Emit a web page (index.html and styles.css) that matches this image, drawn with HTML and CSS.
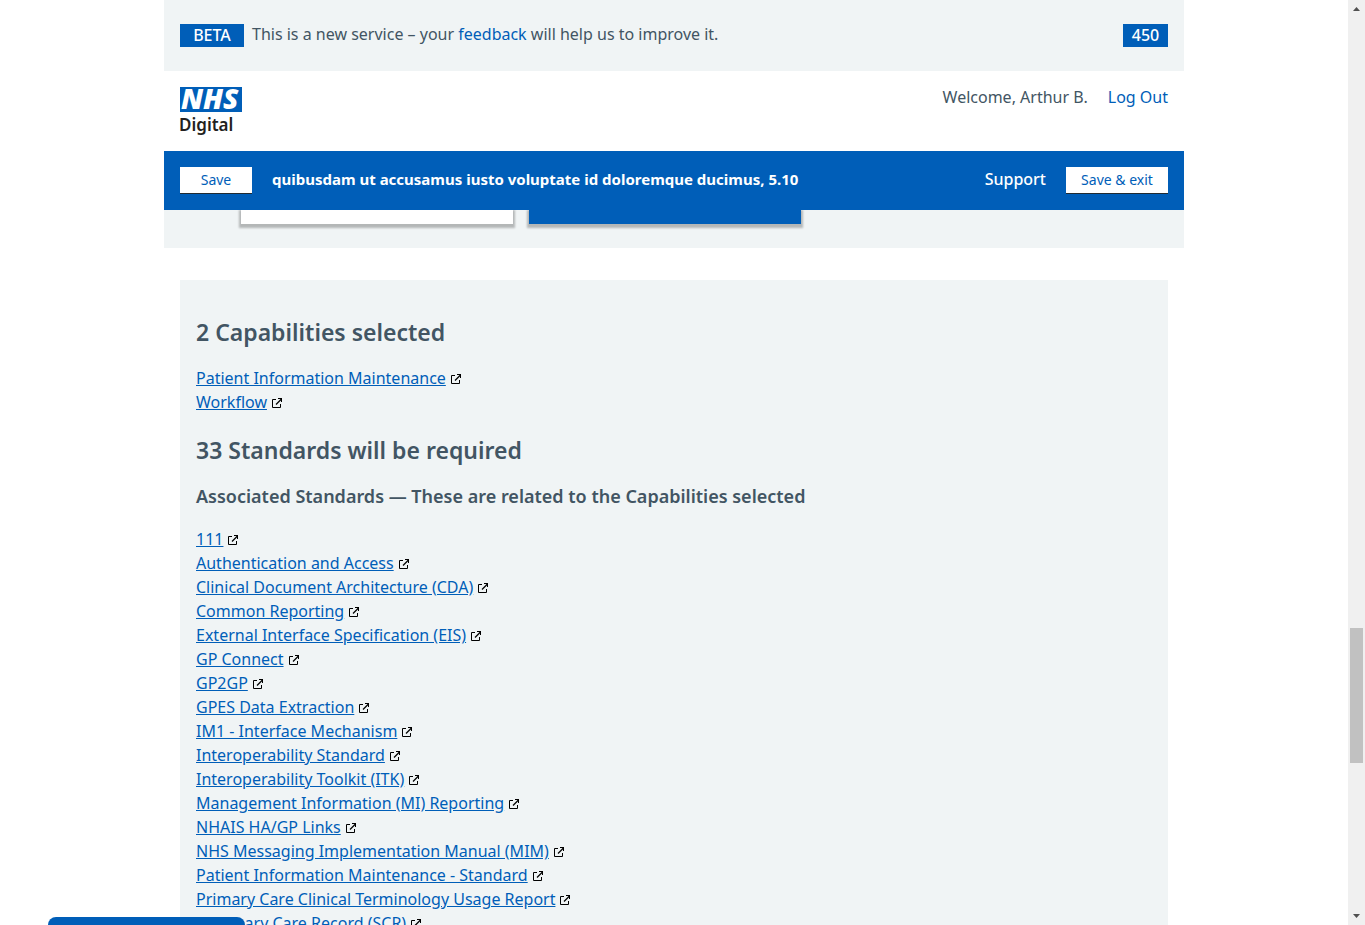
FILE: index.html
```
<!DOCTYPE html>
<html lang="en">
<head>
<meta charset="utf-8">
<title>NHS Digital - Capabilities and Standards</title>
<link rel="stylesheet" href="styles.css">
</head>
<body>
<svg class="sprite" aria-hidden="true">
  <symbol id="ext" viewBox="0 0 12 12">
    <path d="M5 2.500H1.500v8h8V7" fill="none" stroke="#000"/>
    <path d="M5 7.500L10 2.500" fill="none" stroke="#000" stroke-width="1.300"/>
    <path d="M7 1.500h3.500V5" fill="none" stroke="#000"/>
    <path d="M8 1h3v3z" fill="#000"/>
  </symbol>
</svg>
<div class="window">
  <div class="page">
    <header class="header">
      <div class="beta">
        <span class="tag">BETA</span>
        <p class="beta-text">This is a new service – your <a href="#feedback">feedback</a> will help us to improve it.</p>
        <span class="count">450</span>
      </div>
      <div class="account">
        <a class="logo" href="#home" aria-label="NHS Digital">
          <svg width="64" height="54" viewBox="0 0 64 54" aria-hidden="true">
            <rect width="62" height="25" fill="#005eb8"/>
            <text class="logo-nhs" x="1" y="22">NHS</text>
            <text class="logo-digital" x="-1" y="44">Digital</text>
          </svg>
        </a>
        <nav class="user"><span>Welcome, Arthur B.</span><a href="#logout">Log Out</a></nav>
      </div>
      <div class="bar">
        <button class="btn btn-save" type="button">Save</button>
        <h1 class="title">quibusdam ut accusamus iusto voluptate id doloremque ducimus, 5.10</h1>
        <a class="support" href="#support">Support</a>
        <button class="btn btn-exit" type="button">Save &amp; exit</button>
      </div>
    </header>
    <div class="cards"><div class="card"></div><div class="card card-selected"></div></div>
    <main class="panel">
      <h2>2 Capabilities selected</h2>
      <ul class="links">
        <li><a href="#c1">Patient Information Maintenance</a><svg class="ext"><use href="#ext"/></svg></li>
        <li><a href="#c2">Workflow</a><svg class="ext"><use href="#ext"/></svg></li>
      </ul>
      <h2>33 Standards will be required</h2>
      <h3>Associated Standards — These are related to the Capabilities selected</h3>
      <ul class="links">
        <li><a href="#s1">111</a><svg class="ext"><use href="#ext"/></svg></li>
        <li><a href="#s2">Authentication and Access</a><svg class="ext"><use href="#ext"/></svg></li>
        <li><a href="#s3">Clinical Document Architecture (CDA)</a><svg class="ext"><use href="#ext"/></svg></li>
        <li><a href="#s4">Common Reporting</a><svg class="ext"><use href="#ext"/></svg></li>
        <li><a href="#s5">External Interface Specification (EIS)</a><svg class="ext"><use href="#ext"/></svg></li>
        <li><a href="#s6">GP Connect</a><svg class="ext"><use href="#ext"/></svg></li>
        <li><a href="#s7">GP2GP</a><svg class="ext"><use href="#ext"/></svg></li>
        <li><a href="#s8">GPES Data Extraction</a><svg class="ext"><use href="#ext"/></svg></li>
        <li><a href="#s9">IM1 - Interface Mechanism</a><svg class="ext"><use href="#ext"/></svg></li>
        <li><a href="#s10">Interoperability Standard</a><svg class="ext"><use href="#ext"/></svg></li>
        <li><a href="#s11">Interoperability Toolkit (ITK)</a><svg class="ext"><use href="#ext"/></svg></li>
        <li><a href="#s12">Management Information (MI) Reporting</a><svg class="ext"><use href="#ext"/></svg></li>
        <li><a href="#s13">NHAIS HA/GP Links</a><svg class="ext"><use href="#ext"/></svg></li>
        <li><a href="#s14">NHS Messaging Implementation Manual (MIM)</a><svg class="ext"><use href="#ext"/></svg></li>
        <li><a href="#s15">Patient Information Maintenance - Standard</a><svg class="ext"><use href="#ext"/></svg></li>
        <li><a href="#s16">Primary Care Clinical Terminology Usage Report</a><svg class="ext"><use href="#ext"/></svg></li>
        <li><a href="#s17">Summary Care Record (SCR)</a><svg class="ext"><use href="#ext"/></svg></li>
      </ul>
    </main>
  </div>
  <div class="scrollbar" aria-hidden="true">
    <svg width="17" height="17" viewBox="0 0 17 17"><path d="M5 11h7L8.500 7z" fill="#505050"/></svg>
    <div class="track"><div class="thumb"></div></div>
    <svg width="17" height="17" viewBox="0 0 17 17"><path d="M5 6h7L8.500 10z" fill="#505050"/></svg>
  </div>
</div>
<div class="drawer"></div>
</body>
</html>
```
FILE: styles.css
```
* { box-sizing: border-box; }
body {
  margin: 0;
  background: #fff;
  color: #425563;
  font-family: "Noto Sans", "Open Sans", sans-serif;
  font-size: 16px;
  line-height: 24px;
}
h1, h2, h3, p, ul { margin: 0; padding: 0; }
a { color: #005eb8; text-decoration: none; }
.sprite { display: none; }
.window { display: flex; height: 100vh; overflow: hidden; }
.page {
  flex: 0 1 1020px;
  min-width: 0;
  margin: 0 auto;
}
.header { position: relative; z-index: 1; }

.beta {
  display: flex;
  align-items: flex-start;
  padding: 24px 16px;
  background: #f0f4f5;
}
.tag, .count {
  background: #005eb8;
  color: #fff;
  font-weight: 500;
  line-height: 23px;
  text-align: center;
}
.tag { width: 64px; }
.count { width: 45px; margin-left: auto; }
.beta-text { margin-left: 8px; line-height: 20px; }

.account {
  display: flex;
  justify-content: space-between;
  padding: 16px 16px 0;
  height: 80px;
  background: #fff;
}
.logo svg { display: block; overflow: visible; }
.logo-nhs {
  fill: #fff;
  font: italic 800 28px "Open Sans", sans-serif;
}
.logo-digital {
  fill: #231f20;
  font: 600 17px "Noto Sans", sans-serif;
}
.user { display: flex; gap: 20px; line-height: 20px; }

.bar {
  display: flex;
  align-items: flex-start;
  padding: 16px;
  background: #005eb8;
  color: #fff;
}
.btn {
  height: 27px;
  padding: 0;
  border: 0;
  border-bottom: 1px solid #212b32;
  background: #fff;
  color: #005eb8;
  font: 14px/26px "Noto Sans", sans-serif;
}
.btn-save { width: 72px; }
.btn-exit { width: 102px; margin-left: 20px; }
.title { margin-left: 20px; font-size: 15px; font-weight: 700; line-height: 24px; }
.support { margin-left: auto; color: #fff; font-weight: 500; }

.cards {
  display: flex;
  gap: 16px;
  height: 38px;
  padding-left: 77px;
  background: #f0f4f5;
}
.card {
  width: 272px;
  height: 14px;
  background: #fff;
  box-shadow: 0 2px 2px 2px rgba(0, 0, 0, .25);
}
.card-selected { background: #005eb8; }

.panel {
  margin: 32px 16px 0;
  padding: 36px 16px 32px;
  background: #f0f4f5;
}
h2 { font-size: 23px; font-weight: 600; line-height: 32px; }
h3 { margin: 18px 0 19px; font-size: 18px; font-weight: 600; line-height: 24px; }
.links { list-style: none; }
h2 + .links { margin: 18px 0 20px; }
.links li { display: flex; align-items: center; gap: 4px; }
.links a { text-decoration: underline; }
.ext { width: 12px; height: 12px; margin-top: 2px; }

.scrollbar {
  display: flex;
  flex: none;
  flex-direction: column;
  width: 17px;
  background: #f0f0f0;
}
.track { flex: 1; padding: 0 2px; }
.thumb { height: 135px; margin-top: 611px; background: #c1c1c1; }

.drawer {
  position: fixed;
  bottom: 0;
  left: 48px;
  z-index: 2;
  width: 197px;
  height: 8px;
  border-radius: 8px 8px 0 0;
  background: #005eb8;
}
```
